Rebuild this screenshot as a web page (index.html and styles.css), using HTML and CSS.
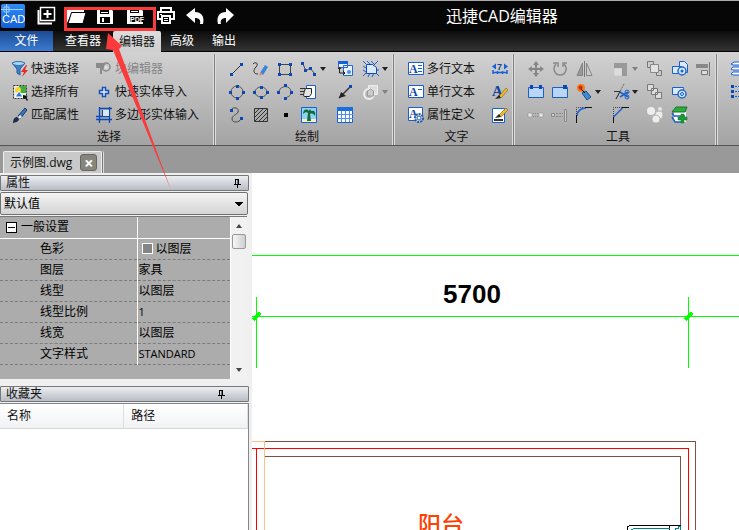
FILE: index.html
```html
<!DOCTYPE html>
<html lang="zh-CN">
<head>
    <meta charset="UTF-8">
    <meta name="viewport" content="width=device-width, initial-scale=1.0">
    <title>迅捷CAD编辑器</title>
    <link rel="stylesheet" href="styles.css">
</head>
<body>
    <header class="titlebar">
        <svg class="logo" width="24" height="24" viewBox="0 0 24 24">
            <defs>
                <linearGradient id="logoFill" x1="0" y1="0" x2="0" y2="1"><stop offset="0" stop-color="#2f8cf5"/><stop offset="1" stop-color="#1560d8"/></linearGradient>
            </defs>
            <rect width="24" height="24" rx="2" fill="url(#logoFill)"/>
            <path d="M5.5 0v11M0 5.5h22M3 3h5v5H3z" stroke="#9fd0ff" fill="none"/>
            <text x="1" y="19" class="logo-text">CAD</text>
        </svg>
        <div class="quick">
            <button aria-label="新建"><svg viewBox="0 0 20 20"><path d="M4.500 1.500h14v13h-14z" fill="#000" stroke="#fff" stroke-width="1.500"/><path d="M2.500 4v13.500H16M11.500 4v8M7.500 8h8" stroke="#fff" stroke-width="2" fill="none"/></svg></button>
            <button aria-label="打开"><svg viewBox="0 0 20 20"><path d="M1 17V2h6l2 2h9v2H6z" fill="#fff"/><path d="M5.500 6.500H20L17 17.500H2z" fill="#fff" stroke="#000"/></svg></button>
            <button aria-label="保存"><svg viewBox="0 0 20 20"><path d="M1 2h13l3 3v13H1z" fill="#fff"/><path d="M4 2h9v6H4zM4 11h10v6H4z" fill="#000"/><path d="M5 3.500h7M5 6.500h7" stroke="#fff"/><path d="M6 12h2v4H6z" fill="#fff"/></svg></button>
            <button aria-label="保存为PDF"><svg viewBox="0 0 20 20"><path d="M1 2h13l3 3v13H1z" fill="#fff"/><path d="M4 2h9v5H4zM4 10h14v6H4z" fill="#000"/><path d="M5 3.500h7M5 5.500h7" stroke="#fff"/><text x="4" y="16" class="pdf-text">PDF</text></svg></button>
            <button aria-label="打印"><svg viewBox="0 0 20 20"><path d="M5 6V2h10v4M5 13H2V6h16v7h-3" fill="none" stroke="#fff" stroke-width="2"/><path d="M6 10h8v7H6z" fill="#000" stroke="#fff" stroke-width="2"/><path d="M8 12.500h4M8 14.500h4M4 8.500h2" stroke="#fff"/></svg></button>
            <button aria-label="撤销"><svg viewBox="0 0 20 20"><path d="M9 2v4c6 0 10 4 8 12h-3c1-4-1-6-5-6v5L0 9z" fill="#fff"/></svg></button>
            <button aria-label="重做"><svg viewBox="0 0 20 20"><path d="M10 2v4C4 6 0 10 2 18h3c-1-4 1-6 5-6v5l8-8z" fill="#fff"/></svg></button>
        </div>
        <h1>迅捷CAD编辑器</h1>
    </header>

    <nav class="tabs">
        <button class="tab file">文件</button>
        <button class="tab">查看器</button>
        <button class="tab active">编辑器</button>
        <button class="tab">高级</button>
        <button class="tab">输出</button>
    </nav>

    <div class="ribbon">
        <section class="group select">
            <div class="tools">
                <button><svg viewBox="0 0 18 18"><path d="M1 3h13l-5 6v6l-3-2V9z" fill="#3c86c8" stroke="#1f5c9c"/><ellipse cx="7.500" cy="3.500" rx="6" ry="2" fill="#a9d4f5" stroke="#2b6cab"/><path d="M15 5l-5 7h3l-2 5 6-7h-3l2-5z" fill="#e8262c"/></svg>快速选择</button>
                <button disabled><svg viewBox="0 0 18 18"><path d="M1 3h7l5 3-5 3H7v5H5V8H1z" fill="#8a8a8a"/><circle cx="11" cy="7" r="4" fill="none" stroke="#8a8a8a" stroke-width="1.500"/><circle cx="11" cy="7" r="2" fill="#ddd"/></svg>块编辑器</button>
                <button><svg viewBox="0 0 18 18"><path d="M2.500 2.500h13v13h-13z" fill="#e6ede6" stroke="#333" stroke-dasharray="2 1"/><path d="M8 3h7v7H8z" fill="#3fae3a"/><circle cx="7" cy="7" r="3" fill="#ffd42e"/><path d="M4 14l4-6 4 6z" fill="#2e7bd6" stroke="#fff"/><path d="M12 12l5 1-2 1 2 3-1 1-2-3-2 1z" fill="#111"/></svg>选择所有</button>
                <button><svg viewBox="0 0 18 18"><path d="M7.500 4.500h3v3h3v3h-3v3h-3v-3h-3v-3h3z" fill="#e0ecfa" stroke="#1450b8" stroke-width="1.500"/></svg>快速实体导入</button>
                <button><svg viewBox="0 0 18 18"><path d="M2 17c0-4 2-6 4-6l2 2c0 2-2 3-6 4z" fill="#1b2b4a"/><path d="M7 10l2 3 7-9-2-2z" fill="#3a78bf" stroke="#1a355e"/><path d="M7 11l2 2 2-2-2-2z" fill="#eee"/></svg>匹配属性</button>
                <button><svg viewBox="0 0 18 18"><path d="M4.500 1v16M7.500 4v6M14.500 1v16M4 2.500h13M1 13.500h16M1 10.500h13" fill="none" stroke="#0c49b8" stroke-width="1.300"/><path d="M8 4h6v6H8z" fill="#dbe6f4"/></svg>多边形实体输入</button>
            </div>
            <h2>选择</h2>
        </section>

        <section class="group draw">
            <div class="tools">
                <button aria-label="直线"><svg viewBox="0 0 18 18"><path d="M4 14L14 4" stroke="#333"/><path class="node" d="M2 13h3v3H2zM12 3h3v3h-3z"/></svg></button>
                <button aria-label="手绘"><svg viewBox="0 0 18 18"><path d="M1 4c3-3 6 0 3 3s-3 7 2 7" fill="none" stroke="#333"/><path d="M8 13l5-8 3 2-5 8z" fill="#3485e0"/><path d="M8 12l3 2-4 2z" fill="#e8867c"/></svg></button>
                <button aria-label="矩形"><svg viewBox="0 0 18 18"><path d="M3.500 4.500h11v10h-11z" fill="none" stroke="#444"/><path class="node" d="M2 3h3v3H2zM13 3h3v3h-3zM2 13h3v3H2zM13 13h3v3h-3z"/></svg></button>
                <button aria-label="多段线" class="has-menu"><svg viewBox="0 0 18 18"><path d="M3 4l3 7 4-3 5 6" fill="none" stroke="#444"/><path class="node" d="M1 2h3v3H1zM4 9h3v3H4zM9 7h3v3H9zM13 13h3v3h-3z"/></svg><i></i></button>
                <button aria-label="插入块"><svg viewBox="0 0 18 18"><path d="M2.500 2.500h9v5h-9zM7.500 5.500h9v10h-9z" fill="#e7f0fb" stroke="#2668c8"/><path d="M2 1h10v3H2z" fill="#1561d8"/><path d="M3.500 7v6h5M2 9l1.500-2L5 9M7 11l2 2-2 2" fill="none" stroke="#222"/><circle cx="13" cy="12" r="2" fill="#4d93e8"/></svg></button>
                <button aria-label="边界" class="has-menu"><svg viewBox="0 0 18 18"><path d="M1 1l3 3M5 1l3 3M9 1l3 3M16 1l-4 4M1 6l3 2M1 10l3 2M4 13l-3 3M8 13l-2 4M12 13l-2 4M15 10h2M14 13l3 3" stroke="#1c5fca"/><path d="M4.500 4.500h6l4 3v6h-10z" fill="#dbe9f9" stroke="#0f4cb5"/></svg><i></i></button>

                <button aria-label="圆"><svg viewBox="0 0 18 18"><circle cx="9" cy="9" r="6" fill="none" stroke="#555"/><path class="node" d="M8 2h3v3H8zM1 8h3v3H1zM14 8h3v3h-3zM8 14h3v3H8z"/></svg></button>
                <button aria-label="椭圆"><svg viewBox="0 0 18 18"><ellipse cx="9" cy="9" rx="6" ry="5" fill="none" stroke="#555"/><path class="node" d="M8 3h3v3H8zM1 8h3v3H1zM14 8h3v3h-3zM8 13h3v3H8z"/></svg></button>
                <button aria-label="圆弧"><svg viewBox="0 0 18 18"><path d="M3 8c2-6 12-6 12 1 0 4-3 5-6 6" fill="none" stroke="#555"/><path class="node" d="M8 1h3v3H8zM1 8h3v3H1zM14 8h3v3h-3zM8 14h3v3H8z"/></svg></button>
                <button aria-label="复制"><svg viewBox="0 0 18 18"><path d="M6.500 2.500h9v13h-9z" fill="#fff" stroke="#1c5fca"/><path d="M5.500 5.500h6v5l-2 3h-5c-2 0 0-6 1-8z" fill="#e5e5e5" stroke="#222"/><path d="M0 5.500h5M0 8.500h4M0 11.500h4" stroke="#333"/></svg></button>
                <button aria-label="引线"><svg viewBox="0 0 18 18"><path d="M3 15L14 4" stroke="#333" stroke-width="1.500"/><path d="M3 15l2-6 5 4z" fill="#222"/><path class="node" d="M13 2h3v3h-3z"/></svg></button>
                <button aria-label="区域" class="has-menu" disabled><svg viewBox="0 0 18 18"><path d="M6.500 2.500h9v9h-9z" fill="#ddd" stroke="#eee"/><circle cx="7" cy="11" r="5" fill="none" stroke="#eee" stroke-width="2"/><path d="M5.500 13V8l3-2 3 2v5z" fill="#ccc" stroke="#999"/></svg><i></i></button>

                <button aria-label="样条曲线"><svg viewBox="0 0 18 18"><path d="M3 4c2-4 9-2 7 2-1 3-6 3-6 7s7 4 9 0" fill="none" stroke="#444"/><path class="node" d="M2 3h3v3H2zM12 11h3v3h-3z"/></svg></button>
                <button aria-label="填充"><svg viewBox="0 0 18 18"><path d="M2.500 2.500h13v13h-13z" fill="#aaa" stroke="#333"/><path d="M3 7l4-4M3 11l8-8M3 15L15 3M7 15l8-8M11 15l4-4" stroke="#333"/></svg></button>
                <button aria-label="点"><svg viewBox="0 0 18 18"><path d="M8 7h4v4H8z" fill="#000"/></svg></button>
                <button aria-label="图像"><svg viewBox="0 0 18 18"><path d="M1.500 1.500h15v15h-15z" fill="#8fd3f4" stroke="#1561d8"/><path d="M2 13h14v3H2z" fill="#f4f1c4"/><path d="M9 5c-3-3-6-1-6 3 2-2 4-2 5-1l-1 8h4l-1-7c2-1 4 0 5 2 1-4-1-6-4-5 0-2-2-2-2 0z" fill="#146b3a"/></svg></button>
                <button aria-label="表格"><svg viewBox="0 0 18 18"><path d="M1.500 1.500h15v15h-15z" fill="#fff" stroke="#1561d8"/><path d="M1 1h16v4H1z" fill="#1a6fe0"/><path d="M5.500 5v11M9.500 5v11M13.500 5v11M2 8.500h15M2 12.500h15" stroke="#4d93e8"/></svg></button>
            </div>
            <h2>绘制</h2>
        </section>

        <section class="group text">
            <div class="tools">
                <button><svg viewBox="0 0 18 18"><path d="M1.500 2.500h15v12h-15z" fill="#fff" stroke="#1c5fca"/><text x="2" y="13" class="a-text">A</text><path d="M11 5.500h4M11 8.500h4M11 11.500h4" stroke="#1c5fca"/></svg>多行文本</button>
                <button aria-label="标注文字"><svg viewBox="0 0 18 18"><path d="M1 6.500l4-3v6zM17 6.500l-4-3v6z" fill="#1561d8"/><text x="6" y="10" class="q-text">7</text><path d="M2 10v4M16 10v4M2 12.500h14M6.500 11v3M11.500 11v3" stroke="#1561d8" stroke-width="1.500"/></svg></button>
                <button><svg viewBox="0 0 18 18"><path d="M1.500 2.500h15v12h-15z" fill="#fff" stroke="#1c5fca"/><text x="2" y="13" class="a-text">A</text><path d="M11 6.500h4" stroke="#1c5fca"/></svg>单行文本</button>
                <button aria-label="文字样式"><svg viewBox="0 0 18 18"><text x="1" y="13" class="a-text big">A</text><path d="M8 13l7-8 2 2-7 8z" fill="#f0b92b" stroke="#704c1a" stroke-width=".5"/><path d="M4 16l4-4 2 3z" fill="#222"/></svg></button>
                <button><svg viewBox="0 0 18 18"><path d="M1.500 1.500h14v13h-14z" fill="#fff" stroke="#1c5fca"/><text x="2" y="12" class="a-text">A</text><circle cx="12" cy="12" r="4" fill="#cfe0f5" stroke="#24579e" stroke-width="2" stroke-dasharray="2 1"/><circle cx="12" cy="12" r="2" fill="#fff" stroke="#24579e"/></svg>属性定义</button>
                <button aria-label="编辑文字"><svg viewBox="0 0 18 18"><path d="M1.500 2.500h12v14h-12z" fill="#fff" stroke="#1561d8"/><path d="M3 14h9" stroke="#333" stroke-width="2"/><path d="M8 9l7-7 2 2-7 7z" fill="#f0b92b" stroke="#704c1a" stroke-width=".5"/><path d="M4 12l4-4 2 3z" fill="#222"/></svg></button>
            </div>
            <h2>文字</h2>
        </section>

        <section class="group modify">
            <div class="tools">
                <button aria-label="移动" disabled><svg viewBox="0 0 18 18"><path d="M9 3v12M3 9h12" stroke="#858585" stroke-width="2"/><path d="M9 1l3 4H6zM9 17l3-4H6zM1 9l4-3v6zM17 9l-4-3v6z" fill="#858585"/></svg></button>
                <button aria-label="旋转" disabled><svg viewBox="0 0 18 18"><path d="M5 4C1 9 4 15 9 15c6 0 8-7 4-11M2 3h5v4M16 3h-4v4" fill="none" stroke="#8a8a8a" stroke-width="1.500"/></svg></button>
                <button aria-label="镜像" disabled><svg viewBox="0 0 18 18"><path d="M7.500 3v12.500H2z" fill="#999" stroke="#858585"/><path d="M11.500 3v12.500H17z" fill="#ccc" stroke="#858585"/><path d="M9.500 1v16" stroke="#777"/></svg></button>
                <button aria-label="缩放" class="has-menu" disabled><svg viewBox="0 0 18 18"><path d="M2 3h13v13H2z" fill="#999"/><path d="M2.500 8.500h7v7h-7z" fill="#ddd" stroke="#eee" stroke-dasharray="1 1"/></svg><i></i></button>
                <button aria-label="前置" disabled><svg viewBox="0 0 18 18"><path d="M1.500 1.500h6v6h-6zM10.500 10.500h5v5h-5z" fill="#ccc" stroke="#777"/><path d="M4.500 4.500h8v8h-8z" fill="#e2e2e2" stroke="#888"/></svg></button>
                <button aria-label="查看实体"><svg viewBox="0 0 18 18"><path d="M8.500 1.500h5l3 3v8h-8zM1.500 6.500h9v7h-9z" fill="#dce9f8" stroke="#1561d8"/><circle cx="11" cy="11" r="4" fill="#d5e5f8" stroke="#2668c8" stroke-width="1.500"/><circle cx="11" cy="11" r="1.500" fill="#1561d8"/></svg></button>
                <button aria-label="对齐" disabled><svg viewBox="0 0 18 18"><path d="M14.500 2v14" stroke="#777"/><path d="M1 4h12v4H1z" fill="#888"/><path d="M6.500 10.500h6v4h-6z" fill="#ddd" stroke="#777"/></svg></button>

                <button aria-label="复制块"><svg viewBox="0 0 18 18"><path d="M1.500 4.500h15v10h-15z" fill="#b9d5f8" stroke="#1c5fca"/><path class="node" d="M3 2h3v4H3zM12 2h3v4h-3z"/></svg></button>
                <button aria-label="粘贴块"><svg viewBox="0 0 18 18"><path d="M1.500 4.500h15v10h-15z" fill="#b9d5f8" stroke="#1c5fca"/><path class="node" d="M12 2h4v4h-4z"/></svg></button>
                <button aria-label="分解" class="has-menu"><svg viewBox="0 0 18 18"><circle cx="6" cy="5" r="4" fill="#f47b20"/><circle cx="5.500" cy="4.500" r="2" fill="#c92a12"/><path d="M7 10l4-2 5 6-4 3z" fill="#3b8ddb" stroke="#1b4f8d"/><path d="M6 6l4 4" stroke="#111"/></svg><i></i></button>
                <button aria-label="修剪" class="has-menu"><svg viewBox="0 0 18 18"><path d="M12 1L4 16" stroke="#666" stroke-dasharray="2 1"/><path d="M2 8.500h6L4 16" fill="none" stroke="#333"/><path d="M8 9l8 5M8 14l8-5" stroke="#1c5fca" stroke-width="1.500"/><circle cx="15" cy="9" r="2" fill="none" stroke="#1c5fca"/><circle cx="15" cy="14" r="2" fill="none" stroke="#1c5fca"/></svg><i></i></button>
                <button aria-label="后置" disabled><svg viewBox="0 0 18 18"><path d="M1.500 1.500h6v6h-6zM5.500 5.500h6v6h-6zM9.500 9.500h6v6h-6z" fill="#ddd" stroke="#777"/></svg></button>
                <button aria-label="隐藏实体"><svg viewBox="0 0 18 18"><path d="M1.500 4.500h11v7h-11z" fill="#dce9f8" stroke="#1561d8"/><circle cx="11" cy="11" r="4" fill="#d5e5f8" stroke="#2668c8" stroke-width="1.500"/><circle cx="11" cy="11" r="1.500" fill="none" stroke="#1561d8"/></svg></button>
                <span></span>

                <button aria-label="打断" disabled><svg viewBox="0 0 18 18"><path d="M1 7h4v4H1zM12 7h4v4h-4z" fill="#e4e4e4" stroke="#888" stroke-width=".5"/><path d="M6 7.500h6M6 10.500h6" stroke="#888" stroke-dasharray="1 1"/></svg></button>
                <button aria-label="延伸" disabled><svg viewBox="0 0 18 18"><path d="M.5 7.500h3v3h-3zM13.500 3.500h2v12h-2z" fill="#ccc" stroke="#888"/><path d="M5 7.500h7M5 10.500h7" stroke="#888" stroke-dasharray="2 1"/></svg></button>
                <button aria-label="圆角"><svg viewBox="0 0 18 18"><path d="M2 10C2 5 6 2 11 2" fill="none" stroke="#1561d8" stroke-width="1.500"/><path d="M1.500 17V9M10 1.500h7" stroke="#111"/><path d="M1.500 8V1.500H9" fill="none" stroke="#444" stroke-dasharray="1 1"/></svg></button>
                <button aria-label="倒角"><svg viewBox="0 0 18 18"><path d="M1.500 11l9-9" stroke="#1561d8" stroke-width="1.500"/><path d="M1.500 17v-6M10 1.500h7" stroke="#111"/><path d="M1.500 10V1.500H10" fill="none" stroke="#444" stroke-dasharray="1 1"/></svg></button>
                <button aria-label="编组" disabled><svg viewBox="0 0 18 18"><circle cx="5" cy="5" r="4" fill="#eee"/><circle cx="14" cy="3" r="2" fill="#e4e4e4"/><circle cx="13" cy="9" r="4" fill="#eee" stroke="#bbb"/><circle cx="10" cy="13" r="4" fill="#eee" stroke="#bbb"/></svg></button>
                <button aria-label="添加图层"><svg viewBox="0 0 18 18"><path d="M3 6h12v10H3z" fill="#fff"/><path d="M1 6l4-5h11l-2 5z" fill="#2faa3c" stroke="#14752a"/><path d="M1 7l2 3h11M1 11l3 5h8" fill="none" stroke="#1c5fca" stroke-width="1.500"/><path d="M10 8h3v3h3v3h-3v3h-3v-3H7v-3h3z" fill="#1b9c31" stroke="#14752a" stroke-width=".5"/></svg></button>
            </div>
            <h2>工具</h2>
        </section>

        <section class="group layers">
            <div class="tools">
                <button aria-label="图层"><svg viewBox="0 0 18 18"><path d="M1 4l3-2h12v3H3zM1 9l2-2h12v3H3zM1 14l2-2h12v3H3z" fill="#fff" stroke="#1561d8"/></svg></button>
                <button aria-label="线型"><svg viewBox="0 0 18 18"><path d="M2 3.500h15M2 8.500h15M2 13.500h15" stroke="#1561d8" stroke-dasharray="2 1"/><path class="node" d="M1 2h3v3H1zM1 7h3v3H1zM1 12h3v3H1z"/></svg></button>
            </div>
        </section>
    </div>

    <div class="doc-tabs">
        <div class="doc-tab">示例图.dwg <button aria-label="关闭">×</button></div>
    </div>

    <main class="workspace">
        <aside class="dock">
            <div class="panel-title"><span>属性</span><svg class="pin" viewBox="0 0 9 9"><path d="M2.500 0v5M5 0v5M2 .5h4M1 5.500h7M4.500 5v4" stroke="#000" fill="none"/><path d="M5 0h1v5H5z"/></svg></div>
            <select class="preset" aria-label="预设"><option>默认值</option></select>
            <div class="props">
                <table>
                    <tr class="head"><th><button class="fold" aria-label="折叠"></button>一般设置</th><td></td></tr>
                    <tr><th>色彩</th><td><span class="swatch"></span>以图层</td></tr>
                    <tr><th>图层</th><td>家具</td></tr>
                    <tr><th>线型</th><td>以图层</td></tr>
                    <tr><th>线型比例</th><td class="latin">1</td></tr>
                    <tr><th>线宽</th><td>以图层</td></tr>
                    <tr><th>文字样式</th><td class="latin">STANDARD</td></tr>
                </table>
                <div class="scroll">
                    <button class="up" aria-label="向上"></button>
                    <div class="thumb"></div>
                    <button class="down" aria-label="向下"></button>
                </div>
            </div>
            <div class="panel-title favorites-title"><span>收藏夹</span><svg class="pin" viewBox="0 0 9 9"><path d="M2.500 0v5M5 0v5M2 .5h4M1 5.500h7M4.500 5v4" stroke="#000" fill="none"/><path d="M5 0h1v5H5z"/></svg></div>
            <div class="favorites">
                <table>
                    <tr><th>名称</th><th>路径</th></tr>
                </table>
            </div>
        </aside>

        <div class="drawing">
            <svg width="100%" height="100%" shape-rendering="crispEdges">
                <!-- dimension line -->
                <g stroke="#00ff00">
                    <path d="M0 82.500h2000M0 143.500h2000M4.500 124v71M436.500 124v71"/>
                    <path d="M1 147l7-7M433 147l7-7" stroke-width="4"/>
                </g>
                <text x="220" y="130" class="dim">5700</text>
                <!-- balcony walls -->
                <path d="M13 268.500h430.500V400" fill="none" stroke="#804f46"/>
                <path d="M13 283.500h415.500V353" fill="none" stroke="#804f46"/>
                <path d="M0 275.500h436.500V400M4.500 276v130" fill="none" stroke="#ff0000"/>
                <path d="M0 268.500h12.500V400" fill="none" stroke="#ffbf7f"/>
                <text x="166" y="360" class="room">阳台</text>
                <path d="M375.500 360v-6l2-1.500h51M417.500 353v7" fill="none" stroke="#000"/>
                <path d="M379.500 360v-3l2-1.500h36M423.500 360v-4.500h3v-2h2v6" fill="none" stroke="#008080"/>
            </svg>
        </div>
    </main>

    <!-- callout over the toolbar -->
    <svg class="callout" width="180" height="195" viewBox="0 0 180 195">
        <path d="M65.500 8.500h89v21h-89z" fill="none" stroke="#fb3b3b" stroke-width="3"/>
        <path d="M108 33l14 13-3 3 52 141L113 50l-7-1z" fill="#fb3b3b"/>
    </svg>
</body>
</html>
```
FILE: styles.css
```css
* {
    box-sizing: border-box;
}

body {
    margin: 0;
    height: 100vh;
    display: flex;
    flex-direction: column;
    overflow: hidden;
    position: relative;
    font-family: "Open Sans", "Noto Sans CJK SC", sans-serif;
    font-size: 12px;
    line-height: 16px;
    color: #111;
    background: #f0f0f0;
}

button {
    border: none;
    background: none;
    padding: 0;
    margin: 0;
    font: inherit;
    color: inherit;
    display: flex;
    align-items: center;
}

svg {
    display: block;
    flex: none;
}

h1, h2 {
    margin: 0;
    font-weight: normal;
}

/* title bar */
.titlebar {
    height: 31px;
    flex: none;
    display: flex;
    align-items: center;
    padding-left: 1px;
    background: #060606;
    border-top: 1px solid #aaa;
}

.logo-text {
    font: 11px "Liberation Sans", sans-serif;
    fill: #fff;
}

.pdf-text {
    font: bold 7px "Liberation Sans", sans-serif;
    fill: #fff;
}

.quick {
    display: flex;
    gap: 10px;
    margin-left: 11px;
}

.quick svg {
    width: 20px;
    height: 20px;
}

.titlebar h1 {
    margin-left: 210px;
    font-size: 16px;
    line-height: 24px;
    color: #fff;
}

/* ribbon tabs */
.tabs {
    height: 21px;
    flex: none;
    display: flex;
    background: linear-gradient(#0c0c0c, #333);
    border-bottom: 1px solid #000;
}

.tab {
    padding: 0 9px;
    color: #fff;
}

.tab.file {
    width: 53px;
    margin-right: 3px;
    justify-content: center;
    background: linear-gradient(#1d4a94, #3a7bd0);
}

.tab.active {
    margin-left: 3px;
    padding: 0 6px;
    color: #111;
    background: linear-gradient(#ddd, #cfcfcf);
    border-radius: 2px 2px 0 0;
    margin-bottom: -1px;
}

/* ribbon */
.ribbon {
    flex: none;
    display: flex;
    overflow: hidden;
    padding-top: 2px;
    background: linear-gradient(#d2d2d2, #a3a3a3);
    border-bottom: 1px solid #555;
}

.group {
    flex: none;
    padding: 3px 0 0 10px;
    border-right: 1px solid #808080;
    box-shadow: 1px 0 #ddd, inset -1px 0 #ddd;
}

.tools {
    display: grid;
    grid-auto-rows: 23px;
    align-items: center;
}

.tools svg {
    width: 18px;
    height: 18px;
    margin: 0 2px 0 3px;
}

.tools button {
    white-space: nowrap;
}

.tools button:disabled {
    color: #868686;
}

.group h2 {
    font-size: 12px;
    line-height: 16px;
    padding: 3px 4px 0 0;
    text-align: center;
}

.select {
    width: 215px;
    padding-left: 8px;
}

.select .tools {
    grid-template-columns: 84px 1fr;
}

.draw {
    width: 179px;
}

.draw .tools {
    grid-template-columns: 24px 24px 24px 36px 26px 36px;
}

.text {
    width: 120px;
}

.text .tools {
    grid-template-columns: 84px 24px;
}

.modify {
    width: 203px;
}

.modify .tools {
    grid-template-columns: 24px 24px 37px 34px 25px 24px 24px;
}

.layers {
    flex: 1;
    border-right: none;
}

.node {
    fill: #0d47b5;
}

.a-text {
    font: bold 12px "Liberation Serif", serif;
    fill: #12479c;
}

.a-text.big {
    font-size: 15px;
}

.q-text {
    font: bold 9px "Liberation Sans", sans-serif;
    fill: #12479c;
}

.has-menu i {
    border: 3px solid transparent;
    border-top: 4px solid #222;
    border-bottom: none;
}

.has-menu:disabled i {
    border-top-color: #808080;
}

/* document tabs */
.doc-tabs {
    height: 27px;
    flex: none;
    display: flex;
    align-items: flex-end;
    padding-left: 3px;
    background: #999;
}

.doc-tab {
    height: 22px;
    display: flex;
    align-items: center;
    gap: 8px;
    padding: 0 4px 0 6px;
    background: #c9c9c9;
    border: 1px solid #eee;
    border-bottom: none;
    border-radius: 2px 2px 0 0;
    box-shadow: 1px 0 #777, 2px 0 #ddd;
}

.doc-tab button {
    width: 17px;
    height: 17px;
    justify-content: center;
    color: #fff;
    font-weight: bold;
    font-size: 16px;
    background: #86867c;
    border: 1px solid #666;
    border-radius: 3px;
}

/* left dock */
.workspace {
    flex: 1;
    min-height: 0;
    display: flex;
}

.dock {
    width: 252px;
    flex: none;
    display: flex;
    flex-direction: column;
    padding: 2px 3px 0 0;
}

.panel-title {
    height: 16px;
    flex: none;
    display: flex;
    align-items: center;
    justify-content: space-between;
    padding: 0 6px 0 5px;
    background: linear-gradient(#eceef1, #b8bcc5);
    border: 1px solid #777;
    border-radius: 1px;
}

.pin {
    width: 9px;
    height: 9px;
}

.preset {
    height: 23px;
    flex: none;
    margin: 1px 1px 1px 0;
    padding: 0 3px;
    font: inherit;
    color: #000;
    appearance: none;
    border: 1px solid #707070;
    border-radius: 2px;
    background: conic-gradient(from 315deg at 50% 100%, #000 90deg, transparent 0) right 4px center / 8px 4px no-repeat, linear-gradient(#f4f4f4, #d4d4d4);
}

.props {
    display: flex;
    height: 163px;
    flex: none;
    align-items: stretch;
    background: #acacac;
    border-top: 1px solid #777;
    margin-right: 2px;
}

.props table {
    flex: 1;
    align-self: flex-start;
    border-collapse: collapse;
    table-layout: fixed;
    color: #000;
}

.props th,
.props td {
    height: 21px;
    padding: 0 0 0 1px;
    text-align: left;
    font-weight: normal;
    border-bottom: 1px dashed #7c7c7c;
}

.props th {
    width: 137px;
    padding-left: 40px;
    border-right: 1px solid #fff;
}

.props .latin {
    font-size: 11px;
}

.props .head th {
    padding-left: 6px;
}

.props .head th,
.props .head td {
    border-bottom: 1px solid #fff;
}

.fold {
    display: inline-block;
    width: 11px;
    height: 11px;
    margin-right: 4px;
    vertical-align: -1px;
    border: 1px solid #000;
    background: linear-gradient(#000, #000) center / 7px 1px no-repeat, #fff;
}

.swatch {
    display: inline-block;
    width: 11px;
    height: 11px;
    margin: 0 3px;
    vertical-align: -1px;
    background: #858585;
    border: 1px solid #fff;
}

.scroll {
    width: 17px;
    flex: none;
    display: flex;
    flex-direction: column;
    align-items: center;
    padding: 7px 0;
    background: #f1f1f1;
    border-left: 1px solid #fff;
}

.scroll .up,
.scroll .down {
    border: 3px solid transparent;
}

.scroll .up {
    border-top: none;
    border-bottom: 4px solid #444;
}

.scroll .down {
    margin-top: auto;
    border-bottom: none;
    border-top: 4px solid #444;
}

.thumb {
    width: 14px;
    height: 15px;
    margin-top: 6px;
    border: 1px solid #999;
    border-radius: 2px;
    background: linear-gradient(90deg, #f6f6f6, #cfcfcf);
}

.favorites-title {
    margin-top: 7px;
    padding-right: 22px;
}

.favorites {
    flex: 1;
    margin-top: 1px;
    background: #fff;
    border: 1px solid #85858c;
    border-left: none;
    border-bottom: none;
}

.favorites table {
    width: 100%;
    border-collapse: collapse;
    table-layout: fixed;
}

.favorites th {
    height: 24px;
    padding: 0 7px;
    font-weight: normal;
    text-align: left;
    background: linear-gradient(#fff, #f1f2f4);
    border-right: 1px solid #e0e0e0;
    border-bottom: 1px solid #d5d5d5;
}

/* drawing area */
.drawing {
    flex: 1;
    min-width: 0;
    overflow: hidden;
    background: #fff;
}

.dim {
    font: bold 26px "Liberation Sans", sans-serif;
    text-anchor: middle;
    fill: #000;
}

.room {
    font: 500 23px "Noto Sans CJK SC", sans-serif;
    fill: #ff4000;
}

.callout {
    position: absolute;
    left: 0;
    top: 0;
    pointer-events: none;
}
```
